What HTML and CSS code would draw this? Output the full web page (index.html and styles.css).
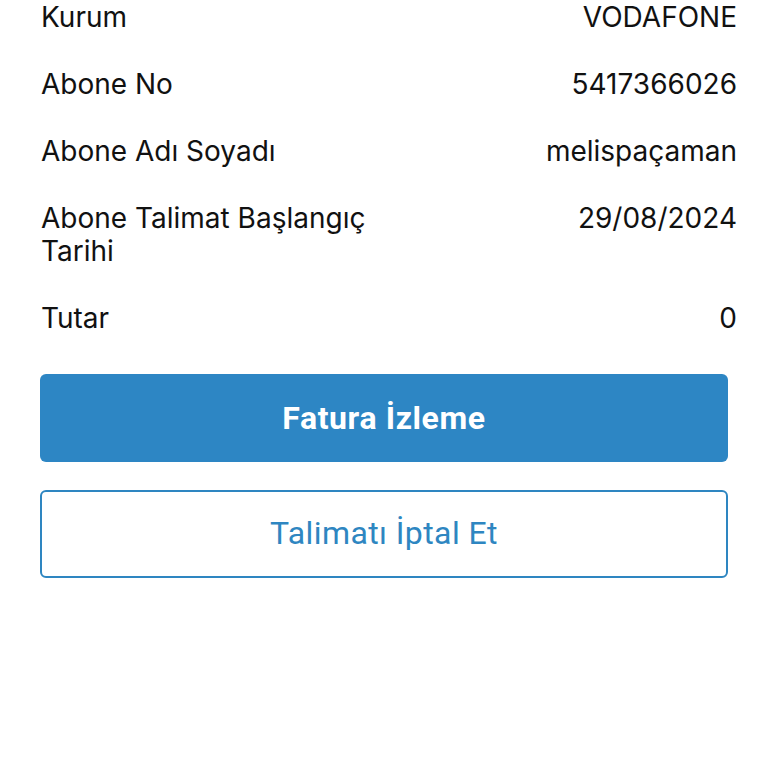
FILE: index.html
```html
<!DOCTYPE html>
<html lang="tr">
<head>
<meta charset="utf-8">
<link rel="stylesheet" href="styles.css">
</head>
<body>
<div class="page">
  <div class="details">
    <div class="row"><div class="label">Kurum</div><div class="value">VODAFONE</div></div>
    <div class="row"><div class="label">Abone No</div><div class="value">5417366026</div></div>
    <div class="row"><div class="label">Abone Adı Soyadı</div><div class="value">melispaçaman</div></div>
    <div class="row"><div class="label">Abone Talimat Başlangıç Tarihi</div><div class="value">29/08/2024</div></div>
    <div class="row"><div class="label">Tutar</div><div class="value">0</div></div>
  </div>
  <div class="actions">
    <button class="btn btn-primary">Fatura İzleme</button>
    <button class="btn btn-outline">Talimatı İptal Et</button>
  </div>
</div>
</body>
</html>
```

FILE: styles.css
```css
html, body {
  margin: 0;
  padding: 0;
  background: #ffffff;
}
.page {
  padding: 1px 40px 0 40px;
  font-family: "Inter", "Liberation Sans", sans-serif;
  color: #111111;
}
.details {
  display: flex;
  flex-direction: column;
  gap: 34px;
  margin-right: -9px;
  padding-left: 1px;
}
.row {
  display: flex;
  justify-content: space-between;
  align-items: flex-start;
  font-size: 28px;
  line-height: 33px;
}
.label {
  max-width: 360px;
}
.value {
  text-align: right;
}
.actions {
  display: flex;
  flex-direction: column;
  gap: 28px;
  margin-top: 39px;
}
.btn {
  display: block;
  width: 100%;
  height: 88px;
  border-radius: 6px;
  font-family: "Roboto", "Liberation Sans", sans-serif;
  font-size: 32px;
  cursor: pointer;
}
.btn-primary {
  background: #2d86c4;
  border: none;
  color: #ffffff;
  font-weight: 700;
  letter-spacing: 0.6px;
}
.btn-outline {
  background: #ffffff;
  border: 2px solid #2e86c1;
  color: #2e86c1;
  font-weight: 400;
  letter-spacing: 0.4px;
  padding-bottom: 4px;
}
```
